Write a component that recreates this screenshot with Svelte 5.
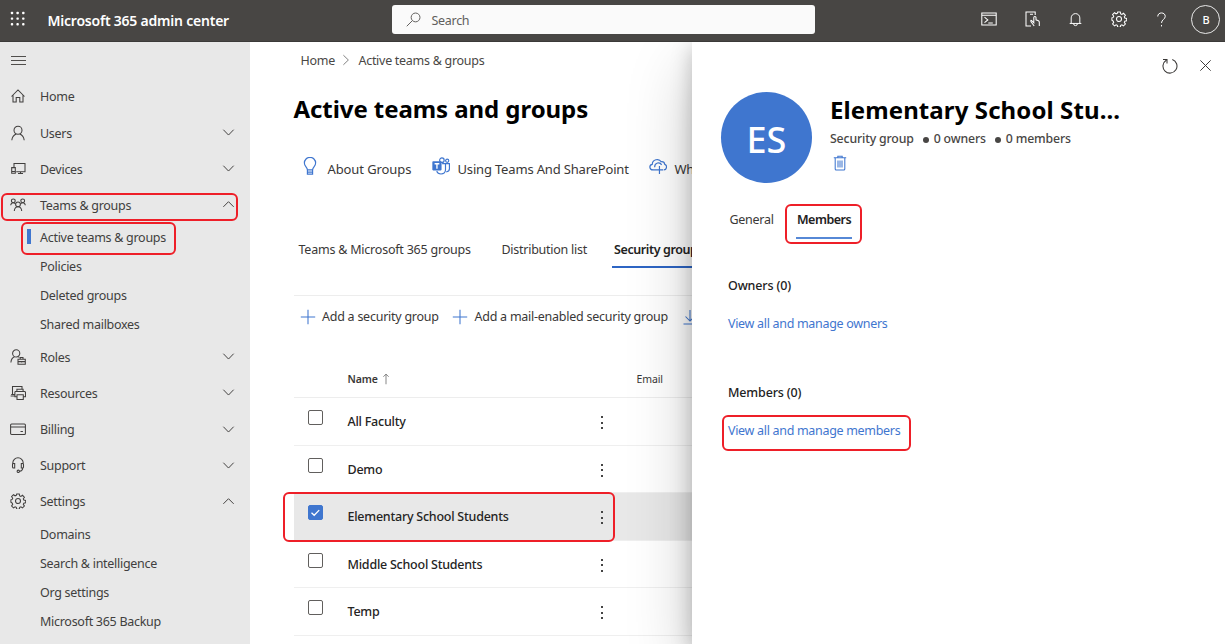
<script>
  const topNav = [
    { label: 'Home', icon: 'home' },
    { label: 'Users', icon: 'user', chev: 'down' },
    { label: 'Devices', icon: 'devices', chev: 'down' },
    { label: 'Teams & groups', icon: 'teams', chev: 'up', marked: true,
      children: ['Active teams & groups', 'Policies', 'Deleted groups', 'Shared mailboxes'] },
    { label: 'Roles', icon: 'roles', chev: 'down' },
    { label: 'Resources', icon: 'resources', chev: 'down' },
    { label: 'Billing', icon: 'billing', chev: 'down' },
    { label: 'Support', icon: 'support', chev: 'down' },
    { label: 'Settings', icon: 'gear', chev: 'up',
      children: ['Domains', 'Search & intelligence', 'Org settings', 'Microsoft 365 Backup'] }
  ];
  const rows = [
    { name: 'All Faculty' },
    { name: 'Demo' },
    { name: 'Elementary School Students', selected: true },
    { name: 'Middle School Students' },
    { name: 'Temp' }
  ];
  const gear = 'M6.7 1h2.6l.4 1.9 1.2.5 1.6-1.1 1.9 1.9-1.1 1.6.5 1.2 1.9.4v2.4l-1.9.4-.5 1.2 1.1 1.6-1.9 1.9-1.6-1.1-1.2.5-.4 1.9H6.7l-.4-1.900-1.2-.5-1.6 1.100-1.900-1.900 1.100-1.600-.5-1.200L.9 9.200V6.800l1.300-.4.5-1.200-1.100-1.600 1.900-1.900 1.600 1.100 1.200-.5z';
</script>

{#snippet icon(name, size = 16)}
  <svg class="icon" width={size} height={size} viewBox="0 0 16 16" fill="none" stroke="currentColor" stroke-width="1.050">
    {#if name === 'home'}
      <path d="M1.500 8.500 8 2l6.500 6.500M3 7v7h3.200V9.500h3.600V14H13V7" />
    {:else if name === 'user'}
      <circle cx="8" cy="5.300" r="4" /><path d="M1.800 15.200c.4-3.500 2.500-5.400 4.400-6.200M14.200 15.200c-.4-3.500-2.500-5.400-4.400-6.200" />
    {:else if name === 'devices'}
      <path d="M4 6.500v-4h11v8.300H6.200M1.700 6.600h3.600v5.600H1.700zM1.700 10.500h3.600M8 12.500h5M10.500 11v1.500" />
    {:else if name === 'teams'}
      <circle cx="3.300" cy="3.800" r="1.900" /><circle cx="12.700" cy="3.800" r="1.900" /><circle cx="8" cy="7.300" r="2.400" />
      <path d="M.7 8.200c.2-1.500 1.100-2.500 2.500-2.500 1 0 1.700.5 2.200 1.200M15.300 8.200c-.2-1.500-1.100-2.500-2.500-2.500-1 0-1.700.5-2.200 1.200M4.300 14c.2-2.400 1.500-4.200 3.700-4.200s3.500 1.800 3.700 4.200" />
    {:else if name === 'roles'}
      <circle cx="6.200" cy="4.400" r="3.600" /><path d="M.9 13.500c.2-3 1.600-4.900 3.600-5.700M8 7.600l1.300.8M8 10.200h7.300v5H8zM10.200 10V8.500H13V10M8 12.600h7.300M11.600 12v1.500" />
    {:else if name === 'resources'}
      <path d="M2.500 9.500v-8H12v2.700M.6 10.900h4.200M1.200 9.500h3.600M5 6.500h9.500c.6 0 1 .4 1 1v4.200h-2.300M7 11.700H4.900V6.500M6.900 6.300V4.200h6.200v2.100M7 9.700h6.300v4.700H7z" />
    {:else if name === 'billing'}
      <rect x=".6" y="3" width="14.800" height="10.400" rx="1" /><path d="M.6 6h14.800M10.500 10.400h2.400" />
    {:else if name === 'support'}
      <path d="M2.800 7V6a5.200 5.200 0 0 1 10.400 0v1M4.700 6.400H3.500a1 1 0 0 0-1 1V10a1 1 0 0 0 1 1h1.200zM11.300 6.400h1.200a1 1 0 0 1 1 1V10a1 1 0 0 1-1 1h-1.200zM12.700 11c0 2.500-1 3-3 3.300" /><circle cx="8.300" cy="14.300" r="1.200" />
    {:else if name === 'gear'}
      <path d={gear} /><circle cx="8" cy="8" r="2.500" />
    {:else if name === 'down'}
      <path d="M2.500 5 8 10.700 13.500 5" />
    {:else if name === 'up'}
      <path d="M2.500 10.500 8 5l5.500 5.500" />
    {:else if name === 'search'}
      <circle cx="10.200" cy="5.800" r="4.700" /><path d="M6.800 9.200.8 15.200" />
    {:else if name === 'shell'}
      <path d="M.8 2h14.400v12H.8zM.8 4.200h14.400M3.500 6.200l3.300 2.700-3.300 2.700M7.300 12h4.500" />
    {:else if name === 'touch'}
      <path d="M11.200 4V1H2v14h5M6 3.200h3M7.200 9.200l2.600 2.600V6.500a1.100 1.100 0 0 1 2.200 0v2.300l2.400 1c.6.300.9.800.9 1.500V15M7.200 9.200c-.5.500-.6 1-.2 1.500L10.200 15" />
    {:else if name === 'bell'}
      <path d="M3.400 12V6.300a4.600 4.600 0 0 1 9.200 0V12M1.800 12.200h12.400M6 12.500a2 2 0 0 0 4 0" />
    {:else if name === 'help'}
      <path d="M4 4.800C4 2.400 5.700 1 8 1s4 1.400 4 3.700c0 3-4 3.600-4 7M8 13.800v1.600" />
    {:else if name === 'refresh'}
      <path d="M10.300 1.500A7 7 0 1 1 4.200 2.200M1 1.500h4v4" />
    {:else if name === 'close'}
      <path d="m2.500 2.500 11 11m0-11-11 11" />
    {:else if name === 'bulb'}
      <path d="M5.700 11.500C5.700 9 3 8.300 3 5.300a5 5 0 0 1 10 0c0 3-2.700 3.700-2.700 6.200zM5.700 11.500v3.800h4.600v-3.800M5.700 13.400h4.600" />
    {:else if name === 'teamsapp'}
      <circle cx="8.800" cy="2.800" r="2" /><circle cx="13.500" cy="3.300" r="1.400" />
      <path d="M9 5.900h3v5.500c0 2-1.500 3.700-4 3.700-2 0-3.300-1-3.800-2.500M12.500 5.900h3v4.600c0 1.500-.9 2.500-2.800 2.700" />
      <rect x=".3" y="3.700" width="8.200" height="8.200" rx=".7" fill="currentColor" stroke="none" />
      <path stroke="#fff" stroke-width="1.200" d="M2.300 6h4.200M4.400 6v4.400" />
    {:else if name === 'cloud'}
      <path d="M6 11.500H3.500C.2 11.500-.2 7 2.900 6.500 3 2.200 8.900.8 10.800 4.200c2-.2 3 .9 3.200 2.300 2.400.6 2 5-.8 5M5 9c0-4 4.700-5 6.200-2M9.300 8v7M6 11.500h6.600" />
    {:else if name === 'plus'}
      <path d="M8 .8v14.400M.8 8h14.400" />
    {:else if name === 'export'}
      <path d="M8 1v11M3.500 7.500 8 12l4.500-4.500M1.500 15h13" />
    {:else if name === 'sort'}
      <path d="M8 15V1.500M4.500 5 8 1.500 11.500 5" />
    {:else if name === 'trash'}
      <path d="M1.800 2.800h12.400M5.800 2.800V1.200h4.400v1.600M3.200 3v11c0 .7.400 1 1 1h7.600c.6 0 1-.3 1-1V3M6 5.500v7M8 5.500v7M10 5.500v7" />
    {/if}
  </svg>
{/snippet}

<div class="app">
  <header>
    <svg class="waffle" width="16" height="16" viewBox="0 0 16 16" fill="#fff">
      {#each [2, 7.6, 13.3] as y}{#each [2, 7.6, 13.3] as x}<rect x={x - 1.2} y={y - 1.2} width="2.4" height="2.4" rx=".8" />{/each}{/each}
    </svg>
    <span class="brand">Microsoft 365 admin center</span>
    <div class="search">{@render icon('search', 15)}<span>Search</span></div>
    <div class="tools">
      {@render icon('shell', 16)}{@render icon('touch', 16)}{@render icon('bell', 15)}{@render icon('gear', 16)}{@render icon('help', 15)}
      <span class="avatar">B</span>
    </div>
  </header>

  <div class="body">
    <nav>
      <div class="burger"><i></i><i></i><i></i></div>
      {#each topNav as item}
        <div class="item">
          {@render icon(item.icon)}
          <span>{item.label}</span>
          {#if item.chev}{@render icon(item.chev, 15)}{/if}
          {#if item.marked}<div class="mark mark-nav"></div>{/if}
        </div>
        {#each item.children ?? [] as child, i}
          <div class="sub" class:active={item.marked && i === 0}>
            <span>{child}</span>
            {#if item.marked && i === 0}<div class="mark mark-sub"></div>{/if}
          </div>
        {/each}
      {/each}
    </nav>

    <main>
      <div class="crumbs"><span>Home</span>{@render icon('down', 14)}<span>Active teams &amp; groups</span></div>
      <h1>Active teams and groups</h1>
      <div class="links">
        <span class="blue">{@render icon('bulb', 18)}</span><span class="l1">About Groups</span>
        <span class="blue">{@render icon('teamsapp', 18)}</span><span class="l2">Using Teams And SharePoint</span>
        <span class="blue">{@render icon('cloud', 18)}</span><span class="l3">Wh</span>
      </div>
      <div class="tabs">
        <span class="t1">Teams &amp; Microsoft 365 groups</span><span class="t2">Distribution list</span><span class="on">Security group</span>
      </div>
      <div class="commands">
        <span class="blue">{@render icon('plus', 16)}</span><span class="c1">Add a security group</span>
        <span class="blue">{@render icon('plus', 16)}</span><span class="c2">Add a mail-enabled security group</span>
        <span class="blue">{@render icon('export', 16)}</span>
      </div>
      <div class="thead"><b>Name</b>{@render icon('sort', 12)}<span>Email</span></div>
      {#each rows as row}
        <div class="row" class:selected={row.selected}>
          <span class="check">
            {#if row.selected}<svg width="15" height="15" viewBox="0 0 15 15" fill="none" stroke="#fff" stroke-width="1.300"><path d="m3.500 7.700 2.700 2.600 5-5.200" /></svg>{/if}
          </span>
          <span class="name">{row.name}</span>
          <span class="dots"><i></i><i></i><i></i></span>
          {#if row.selected}<div class="mark mark-row"></div>{/if}
        </div>
      {/each}
    </main>

    <aside>
      <div class="actions">{@render icon('refresh', 16)}{@render icon('close', 15)}</div>
      <div class="profile">
        <div class="persona"><span>ES</span></div>
        <div class="info">
          <h2>Elementary School Stu...</h2>
          <div class="meta"><span>Security group</span><i></i><span>0 owners</span><i></i><span>0 members</span></div>
          <div class="trash">{@render icon('trash', 16)}</div>
        </div>
      </div>
      <div class="ptabs">
        <span class="g">General</span>
        <span class="m"><b>Members</b><div class="mark mark-tab"></div></span>
      </div>
      <section>
        <h3>Owners (0)</h3>
        <a href="#owners">View all and manage owners</a>
      </section>
      <section>
        <h3>Members (0)</h3>
        <a href="#members">View all and manage members<div class="mark mark-link"></div></a>
      </section>
    </aside>
  </div>
</div>

<style>
  :global(body) { margin: 0; overflow: hidden; }
  * { box-sizing: border-box; }
  .app { width: 1225px; height: 644px; overflow: hidden; display: flex; flex-direction: column; background: #fff; color: #3a3837; font: 12.5px/18px "Noto Sans", "Open Sans", sans-serif; letter-spacing: -.28px; white-space: nowrap; }
  .icon { flex: none; display: block; }
  .blue { color: #3f76cf; flex: none; }

  header { height: 42px; flex: none; background: #484644; border-bottom: 1px solid #3b3a39; color: #fff; display: flex; align-items: center; }
  .waffle { margin: -3px 0 0 10px; flex: none; }
  .brand { margin: 0 0 0 21.500px; width: 344.500px; font-size: 14px; font-weight: 600; letter-spacing: -.22px; }
  .search { width: 423px; height: 29px; margin-top: -3px; background: #fafafa; border-radius: 3px; color: #605e5c; display: flex; align-items: center; padding-left: 14px; gap: 10.500px; }
  .search span { margin-top: 4px; letter-spacing: -.3px; }
  .tools { margin: -3px 0 0 166px; display: grid; grid-template-columns: repeat(5, 43.300px) auto; justify-items: start; align-items: center; }
  .avatar { width: 29px; height: 29px; margin: 1px 0 0 -6px; border: 1px solid #e8e8e8; border-radius: 50%; display: grid; place-items: center; font-size: 11px; font-weight: 500; }

  .body { flex: 1; min-height: 0; display: flex; }
  nav { width: 250px; flex: none; background: #e8e8e8; color: #413f3e; }
  .burger { height: 36.800px; padding: 14px 0 0 11px; display: flex; flex-direction: column; gap: 3px; }
  .burger i { width: 15px; height: 1px; background: #504e4c; }
  .item { position: relative; height: 36.200px; display: flex; align-items: center; padding: 0 14px 0 10px; }
  .item span { flex: 1; margin: 1px 0 0 14px; }
  .item .icon { margin-top: -1px; }
  .sub { position: relative; height: 28.900px; padding: 1px 0 0 40px; display: flex; align-items: center; }
  .active::before { content: ""; position: absolute; left: 27px; top: 5px; width: 4px; height: 15px; background: #3f76cf; }
  .mark { position: absolute; border: 2px solid #ee1f28; border-radius: 6px; pointer-events: none; }
  .mark-nav { left: 1px; top: 6px; width: 237px; height: 28px; }
  .mark-sub { left: 21px; top: -2px; width: 155px; height: 33px; }

  main { width: 442px; flex: none; overflow: hidden; padding-left: 43.500px; }
  .crumbs { height: 37px; display: flex; align-items: center; padding-left: 7px; color: #494745; }
  .crumbs .icon { transform: rotate(-90deg); margin: -1px 5px 0 4.500px; color: #777; }
  h1 { margin: 12px 0 0; height: 36px; font-size: 24px; line-height: 35px; font-weight: 700; color: #000; letter-spacing: -.07px; }
  .links { height: 48px; margin-top: 18px; display: flex; align-items: center; padding: 0 0 0 7px; font-size: 13px; }
  .links .blue { margin-top: -6px; }
  .links .l1 { width: 85px; flex: none; margin: 0 19px 0 9px; letter-spacing: -.1px; }
  .links .l2 { width: 172px; flex: none; margin: 0 19px 0 8px; letter-spacing: -.17px; }
  .links .l3 { margin: 0 0 0 8px; }
  .tabs { height: 38px; margin-top: 38px; display: flex; padding: 10px 0 0 5px; }
  .tabs .t1 { width: 203px; flex: none; letter-spacing: -.22px; }
  .tabs .t2 { width: 110.500px; flex: none; letter-spacing: -.26px; }
  .tabs .on { height: 27px; width: 110px; flex: none; padding-left: 2px; font-weight: 600; color: #222; border-bottom: 2px solid #2d65c4; letter-spacing: -.4px; }
  .commands { height: 43px; margin-top: 26px; border-top: 1px solid #ededed; display: flex; align-items: center; padding-left: 6px; }
  .commands .c1 { width: 117px; flex: none; margin: 0 13px 0 6.500px; letter-spacing: -.25px; }
  .commands .c2 { width: 194px; flex: none; margin: 0 13px 0 6.500px; letter-spacing: -.25px; }
  .thead { height: 60px; padding: 32px 0 0 54px; display: flex; font-size: 10.500px; border-bottom: 1px solid #ededed; letter-spacing: -.1px; }
  .thead b { font-weight: 600; width: 30px; }
  .thead .icon { margin: 3px 0 0 2px; color: #666; }
  .thead span { margin-left: 245px; }
  .row { position: relative; height: 47.600px; border-bottom: 1px solid #efefef; display: flex; align-items: flex-start; padding-left: 14px; }
  .selected { background: #e8e8e8; }
  .check { flex: none; width: 15px; height: 15px; margin-top: 12px; border: 1px solid #615f5d; border-radius: 2px; }
  .check svg { display: block; margin: -1px; }
  .selected .check { background: #3f76cf; border-color: #3f76cf; }
  .name { width: 253.500px; margin: 15px 0 0 25px; font-weight: 500; color: #252423; letter-spacing: -.24px; }
  .dots { margin-top: 18px; display: flex; flex-direction: column; gap: 3.500px; }
  .dots i { width: 2px; height: 2px; background: #444; }
  .mark-row { left: -11px; top: -1px; width: 332px; height: 50px; }

  aside { position: relative; width: 533px; flex: none; background: #fff; box-shadow: 0 26px 60px rgba(0,0,0,.22), 0 5px 20px rgba(0,0,0,.22); clip-path: inset(0 0 0 -70px); padding-left: 29px; }
  .actions { height: 50px; padding: 0 12px 3px 0; display: flex; justify-content: flex-end; align-items: center; gap: 20px; }
  .profile { display: flex; height: 92px; }
  .persona { width: 91px; height: 91px; border-radius: 50%; background: #3f76cf; color: #fff; display: grid; place-items: center; font-size: 36px; font-weight: 500; letter-spacing: 0; }
  .persona span { margin-top: 4px; }
  .info { margin-left: 18px; }
  h2 { margin: 0; height: 37px; font-size: 24px; line-height: 35px; font-weight: 700; color: #000; letter-spacing: .1px; }
  .meta { display: flex; align-items: center; color: #484644; font-size: 12.300px; font-weight: 500; margin-top: 1px; letter-spacing: -.16px; }
  .meta i { width: 6px; height: 6px; border-radius: 50%; background: #484644; margin: 2px 5px 0 9px; }
  .trash { margin: 7px 0 0 2px; color: #3f76cf; }
  .ptabs { display: flex; height: 62px; padding: 27px 0 0 8.500px; }
  .g { width: 66.500px; }
  .m { position: relative; width: 56px; height: 28px; border-bottom: 2px solid #5688d6; color: #222; }
  .m b { font-weight: 600; margin-left: 1px; letter-spacing: -.5px; }
  .mark-tab { left: -11px; top: -7px; width: 77px; height: 40px; }
  section { height: 106.500px; padding: 31px 0 0 7px; }
  h3 { margin: 0; height: 38px; font-size: 12.500px; line-height: 18px; font-weight: 500; color: #222; letter-spacing: -.15px; }
  a { position: relative; display: inline-block; color: #3f76cf; text-decoration: none; letter-spacing: -.31px; }
  .mark-link { left: -6px; top: -7px; width: 189px; height: 36px; }
</style>
